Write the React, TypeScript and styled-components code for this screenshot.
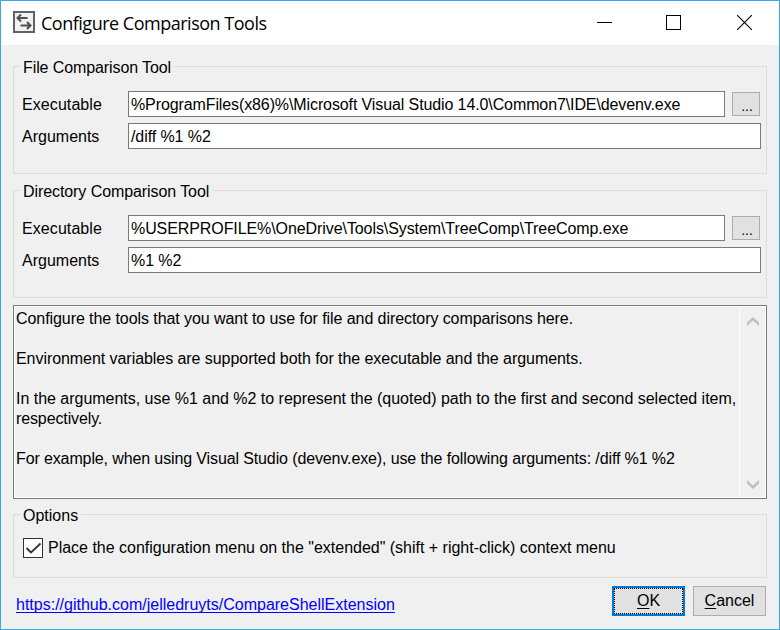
import React from "react";
import styled, { createGlobalStyle } from "styled-components";

const GlobalStyle = createGlobalStyle`
  * { box-sizing: border-box; }
  body { margin: 0; background: #f0f0f0; }
`;

const Window = styled.div`
  width: 780px;
  height: 630px;
  border: 1px solid #3ba7e8;
  background: #f0f0f0;
  color: #000;
  font: 16px/20px "Liberation Sans", Arial, sans-serif;
  display: flex;
  flex-direction: column;
  overflow: hidden;
  white-space: nowrap;
`;

const TitleBar = styled.header`
  height: 44px;
  flex: none;
  background: #fff;
  display: flex;
  align-items: flex-start;
  padding: 10px 27px 0 12px;
`;

const Title = styled.h1`
  margin: 0 0 0 6px;
  flex: 1;
  font: 400 18px/24px "Open Sans", "Noto Sans", sans-serif;
  letter-spacing: -0.49px;
`;

const CaptionButtons = styled.div`
  display: flex;
  gap: 54px;
  padding-top: 4px;

  svg { display: block; }
  svg + svg + svg { margin-left: 2px; }
`;

const Body = styled.main`
  flex: 1;
  padding: 21px 12px 0;
  display: flex;
  flex-direction: column;
`;

const Group = styled.section<{ $height: number; $gap: number }>`
  flex: none;
  height: ${(p) => p.$height}px;
  margin-bottom: ${(p) => p.$gap}px;
  border: 1px solid #dcdcdc;
  padding: 0 5px 0 8px;
`;

const Legend = styled.h2<{ $spacing?: number }>`
  margin: -9px 0 0 -2px;
  padding: 0 3px;
  width: fit-content;
  background: #f0f0f0;
  font: inherit;
  letter-spacing: ${(p) => p.$spacing ?? 0}px;
`;

const Fields = styled.div`
  margin-top: 13px;
  display: flex;
  flex-direction: column;
  gap: 6px;
`;

const FieldRow = styled.div`
  display: flex;
  align-items: center;
  height: 26px;
`;

const Label = styled.span<{ $spacing?: number }>`
  width: 106px;
  padding-top: 2px;
  flex: none;
  letter-spacing: ${(p) => p.$spacing ?? 0}px;
`;

const TextBox = styled.div<{ $spacing?: number }>`
  flex: 1;
  height: 26px;
  border: 1px solid #7a7a7a;
  background: #fff;
  padding: 3px 2px 1px;
  letter-spacing: ${(p) => p.$spacing ?? 0}px;
`;

const Button = styled.button<{ $focused?: boolean }>`
  width: 73px;
  height: 30px;
  padding: 0;
  border: ${(p) => (p.$focused ? "2px solid #0078d7" : "1px solid #adadad")};
  outline: ${(p) => (p.$focused ? "1px dotted #000" : "none")};
  outline-offset: -3px;
  background: #e1e1e1;
  color: #000;
  font: inherit;
  text-align: center;
`;

const BrowseButton = styled(Button)`
  width: 28px;
  height: 24px;
  margin: 0 1px 0 7px;
  padding: 3px 0 0 2px;
  font-size: 14px;
`;

const Info = styled.div`
  flex: none;
  height: 194px;
  margin-bottom: 15px;
  border: 1px solid #7a7a7a;
  box-shadow: inset 0 0 0 1px #fff;
  display: flex;
`;

const InfoText = styled.div`
  flex: 1;
  padding: 3px 0 0 2px;
`;

const Line = styled.p<{ $spacing?: number }>`
  margin: 0;
  height: 20px;
  letter-spacing: ${(p) => p.$spacing ?? 0}px;
`;

const ScrollBar = styled.div`
  width: 27px;
  border-left: 1px solid #fff;
  padding: 11px 0 9px 6.500px;
  display: flex;
  flex-direction: column;
  justify-content: space-between;

  svg { display: block; }
`;

const CheckRow = styled.label`
  display: flex;
  align-items: center;
  gap: 5px;
  margin: 12px 0 0 1px;
  letter-spacing: -0.01px;
`;

const CheckBox = styled.span`
  width: 20px;
  height: 20px;
  border: 1px solid #333;
  background: #fff;

  svg { display: block; }
`;

const Footer = styled.footer`
  display: flex;
  gap: 8px;
  padding: 0 1px 0 3px;
`;

const LinkCell = styled.div`
  flex: 1;
  padding-top: 9px;
`;

const Link = styled.a`
  color: #00f;
  text-decoration: underline;
  text-decoration-thickness: 1px;
  text-underline-offset: 2px;
  text-decoration-skip-ink: none;
`;

const Mnemonic = styled.span`
  text-decoration: underline;
  text-decoration-thickness: 1px;
  text-underline-offset: 2px;
`;

const AppIcon = () => (
  <svg width="22" height="22" viewBox="0 0 22 22" fill="none">
    <rect x="1" y="1" width="20" height="20" fill="#f2f2f4" stroke="#626262" strokeWidth="2" />
    <path d="M14.500 7H5M8 3.500L4.500 7 8 10.500M7.500 14.500H17M14 11l3.500 3.500L14 18" stroke="#505050" strokeWidth="2" />
  </svg>
);

const Chevron = ({ down }: { down?: boolean }) => (
  <svg width="12" height="9" viewBox="0 0 12 9" fill="#bfbfbf">
    <path d={down ? "M0 0L6 5.500 12 0V3.500L6 9 0 3.500Z" : "M0 9L6 3.500 12 9V5.500L6 0 0 5.500Z"} />
  </svg>
);

type Tool = {
  name: string;
  nameSpacing?: number;
  executable: string;
  exeSpacing?: number;
  args: string;
  gap: number;
};

const tools: Tool[] = [
  {
    name: "File Comparison Tool",
    nameSpacing: -0.1,
    executable: "%ProgramFiles(x86)%\\Microsoft Visual Studio 14.0\\Common7\\IDE\\devenv.exe",
    exeSpacing: -0.108,
    args: "/diff %1 %2",
    gap: 16,
  },
  {
    name: "Directory Comparison Tool",
    nameSpacing: -0.08,
    executable: "%USERPROFILE%\\OneDrive\\Tools\\System\\TreeComp\\TreeComp.exe",
    exeSpacing: -0.085,
    args: "%1 %2",
    gap: 7,
  },
];

const help: { text: string; spacing?: number }[] = [
  { text: "Configure the tools that you want to use for file and directory comparisons here.", spacing: -0.073 },
  { text: "" },
  { text: "Environment variables are supported both for the executable and the arguments.", spacing: -0.057 },
  { text: "" },
  {
    text: "In the arguments, use %1 and %2 to represent the (quoted) path to the first and second selected item,",
    spacing: -0.02,
  },
  { text: "respectively.", spacing: -0.12 },
  { text: "" },
  {
    text: "For example, when using Visual Studio (devenv.exe), use the following arguments: /diff %1 %2",
    spacing: -0.12,
  },
];

export default function App() {
  return (
    <>
      <GlobalStyle />
      <Window>
        <TitleBar>
          <AppIcon />
          <Title>Configure Comparison Tools</Title>
          <CaptionButtons>
            <svg width="15" height="15" viewBox="0 0 15 15" stroke="#000"><path d="M0 7.500H15" /></svg>
            <svg width="15" height="15" viewBox="0 0 15 15" stroke="#000" fill="none"><rect x=".5" y=".5" width="14" height="14" /></svg>
            <svg width="15" height="15" viewBox="0 0 15 15" stroke="#000" strokeWidth="1.100"><path d="M0 0L15 15M15 0L0 15" /></svg>
          </CaptionButtons>
        </TitleBar>
        <Body>
          {tools.map((t) => (
            <Group key={t.name} $height={108} $gap={t.gap}>
              <Legend $spacing={t.nameSpacing}>{t.name}</Legend>
              <Fields>
                <FieldRow>
                  <Label $spacing={0.08}>Executable</Label>
                  <TextBox $spacing={t.exeSpacing}>{t.executable}</TextBox>
                  <BrowseButton>...</BrowseButton>
                </FieldRow>
                <FieldRow>
                  <Label>Arguments</Label>
                  <TextBox $spacing={-0.08}>{t.args}</TextBox>
                </FieldRow>
              </Fields>
            </Group>
          ))}
          <Info>
            <InfoText>
              {help.map((l, i) => (
                <Line key={i} $spacing={l.spacing}>{l.text}</Line>
              ))}
            </InfoText>
            <ScrollBar>
              <Chevron />
              <Chevron down />
            </ScrollBar>
          </Info>
          <Group $height={64} $gap={8}>
            <Legend>Options</Legend>
            <CheckRow>
              <CheckBox>
                <svg width="18" height="18" viewBox="0 0 18 18" fill="none" stroke="#333" strokeWidth="1.800">
                  <path d="M2.500 9L7 13.500 16.500 4.500" />
                </svg>
              </CheckBox>
              <span>Place the configuration menu on the "extended" (shift + right-click) context menu</span>
            </CheckRow>
          </Group>
          <Footer>
            <LinkCell>
              <Link>https://github.com/jelledruyts/CompareShellExtension</Link>
            </LinkCell>
            <Button $focused><Mnemonic>O</Mnemonic>K</Button>
            <Button><Mnemonic>C</Mnemonic>ancel</Button>
          </Footer>
        </Body>
      </Window>
    </>
  );
}
